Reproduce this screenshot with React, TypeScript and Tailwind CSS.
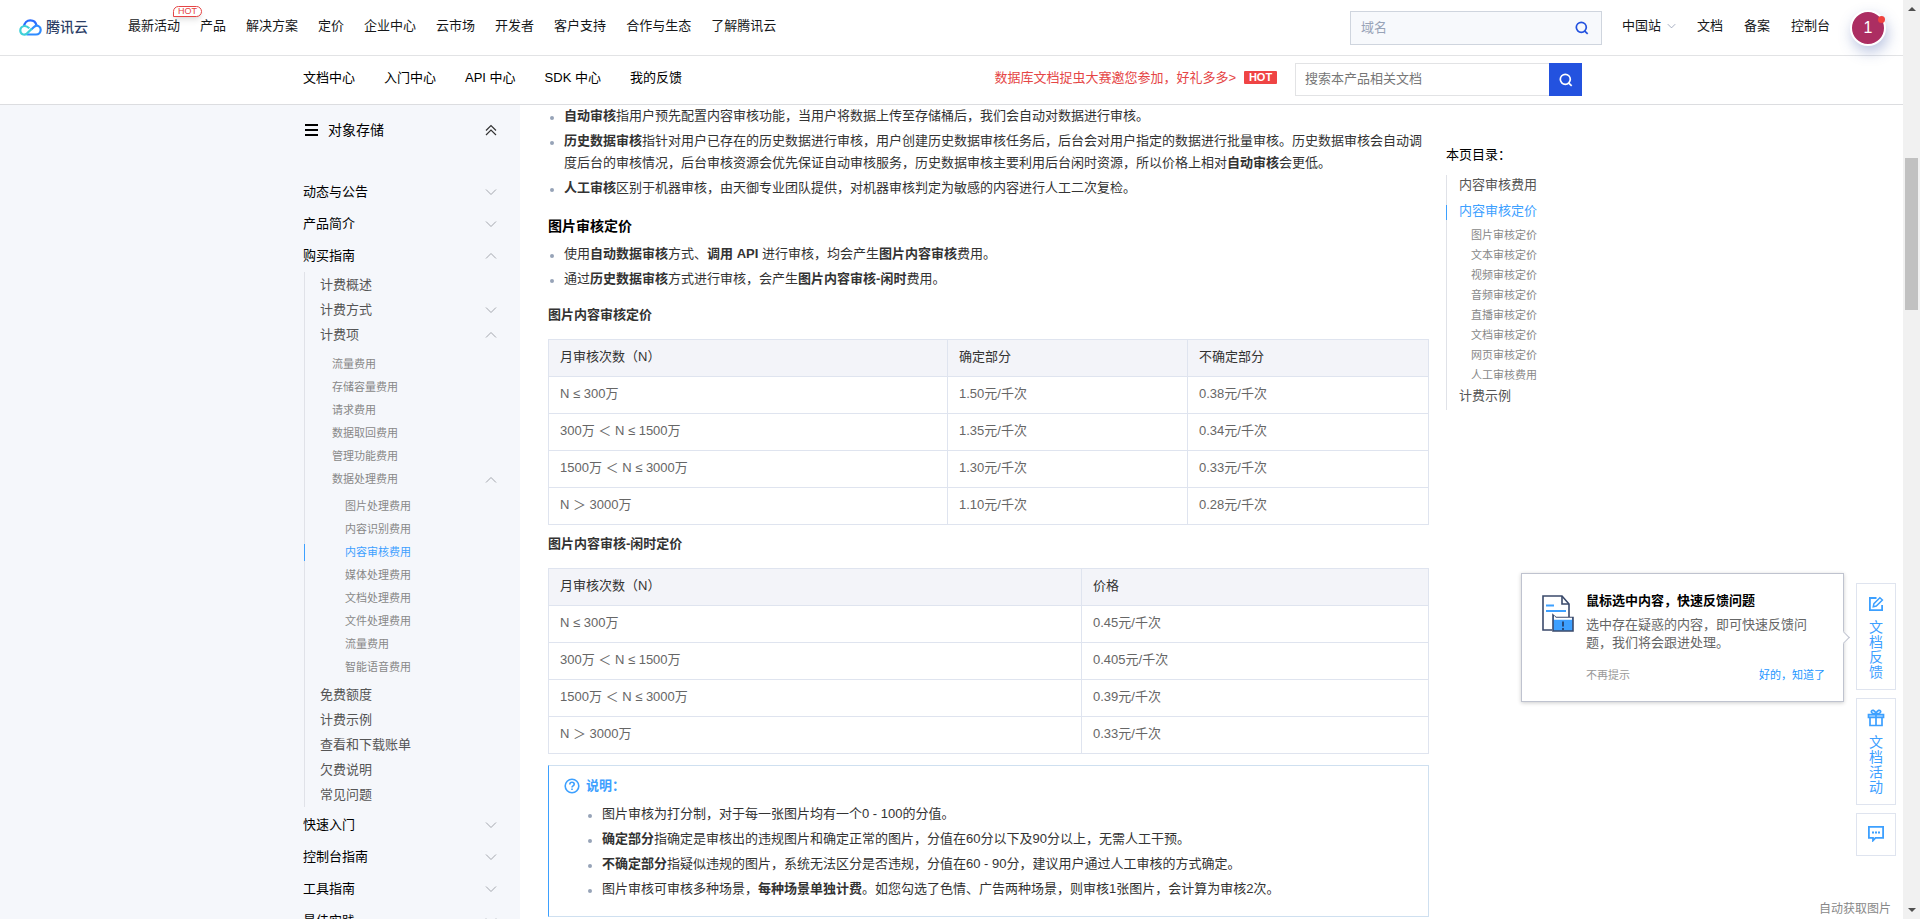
import React from 'react';
import clsx from 'clsx';

const FONT = "font-['Liberation_Sans','Noto_Sans_CJK_SC',sans-serif]";

const topNav = ['最新活动', '产品', '解决方案', '定价', '企业中心', '云市场', '开发者', '客户支持', '合作与生态', '了解腾讯云'];
const subNav = ['文档中心', '入门中心', 'API 中心', 'SDK 中心', '我的反馈'];

type MenuNode = {
  title: string;
  arrow?: 'up' | 'down';
  active?: boolean;
  children?: MenuNode[];
};

const menu: MenuNode[] = [
  { title: '动态与公告', arrow: 'down' },
  { title: '产品简介', arrow: 'down' },
  {
    title: '购买指南',
    arrow: 'up',
    children: [
      { title: '计费概述' },
      { title: '计费方式', arrow: 'down' },
      {
        title: '计费项',
        arrow: 'up',
        children: [
          { title: '流量费用' },
          { title: '存储容量费用' },
          { title: '请求费用' },
          { title: '数据取回费用' },
          { title: '管理功能费用' },
          {
            title: '数据处理费用',
            arrow: 'up',
            children: [
              { title: '图片处理费用' },
              { title: '内容识别费用' },
              { title: '内容审核费用', active: true },
              { title: '媒体处理费用' },
              { title: '文档处理费用' },
              { title: '文件处理费用' },
              { title: '流量费用' },
              { title: '智能语音费用' },
            ],
          },
        ],
      },
      { title: '免费额度' },
      { title: '计费示例' },
      { title: '查看和下载账单' },
      { title: '欠费说明' },
      { title: '常见问题' },
    ],
  },
  { title: '快速入门', arrow: 'down' },
  { title: '控制台指南', arrow: 'down' },
  { title: '工具指南', arrow: 'down' },
  { title: '最佳实践', arrow: 'down' },
];

const rowStyles = [
  'h-8 text-[13px] text-black',
  'h-[25px] pl-[15px] text-[13px] text-[#555]',
  'h-[23px] pl-[27px] text-[11px] text-[#888]',
  'h-[23px] pl-10 text-[11px] text-[#888]',
];

const listStyles = ['', 'ml-px mb-0.5 border-l border-[#e0e2e8]', 'pt-1.5 pb-[3px]', 'pt-1'];

const toc = ['图片审核定价', '文本审核定价', '视频审核定价', '音频审核定价', '直播审核定价', '文档审核定价', '网页审核定价', '人工审核费用'];

const imageRows = [
  ['N ≤ 300万', '1.50元/千次', '0.38元/千次'],
  ['300万 ＜ N ≤ 1500万', '1.35元/千次', '0.34元/千次'],
  ['1500万 ＜ N ≤ 3000万', '1.30元/千次', '0.33元/千次'],
  ['N ＞ 3000万', '1.10元/千次', '0.28元/千次'],
];

const idleRows = [
  ['N ≤ 300万', '0.45元/千次'],
  ['300万 ＜ N ≤ 1500万', '0.405元/千次'],
  ['1500万 ＜ N ≤ 3000万', '0.39元/千次'],
  ['N ＞ 3000万', '0.33元/千次'],
];

const Chevron = ({ up, className }: { up?: boolean; className?: string }) => (
  <svg viewBox="0 0 12 8" className={clsx('h-2 w-3', up && 'rotate-180', className)} fill="none" stroke="currentColor">
    <path d="M1 1.5l5 5 5-5" />
  </svg>
);

const SearchIcon = ({ className }: { className?: string }) => (
  <svg viewBox="0 0 14 14" className={className} fill="none" stroke="currentColor" strokeWidth="1.7">
    <circle cx="6.3" cy="6.3" r="5" />
    <path d="M9.5 9.8l3.2 3" />
  </svg>
);

const Logo = () => (
  <a href="#" className="flex items-center gap-1 text-[14px] font-medium text-[#2c3e66]">
    <svg viewBox="0 0 23 17" className="h-[17px] w-[23px]" fill="none" strokeWidth="2.2">
      <path d="M5 7.6C5.4 3.8 8 1.3 11.3 1.3c3.200 0 5.700 2.200 6.200 5.200" stroke="#2b6cff" />
      <path d="M12 10.800l3.200-3c3-2.500 6.500-.3 6.500 3 0 2.700-2 4.700-4.700 4.700H7.500" stroke="#2f8bff" />
      <path d="M12.800 9.800l-5 4.800c-2.600 2.200-6.500.6-6.500-3 0-2.600 2-4.600 4.500-4.600 2 0 3 .8 4.500 2.300" stroke="#3fd0d8" />
    </svg>
    腾讯云
  </a>
);

const MenuList = ({ nodes, level }: { nodes: MenuNode[]; level: number }) => (
  <ul className={listStyles[level]}>
    {nodes.map((node) => (
      <li key={node.title}>
        <a href="#" className={clsx('flex items-center justify-between pr-[23px]', rowStyles[level])}>
          {node.active ? (
            <span className="relative text-[#3da0ff] before:absolute before:top-0 before:-left-[41px] before:h-[17px] before:w-px before:bg-[#3da0ff]">
              {node.title}
            </span>
          ) : (
            <span>{node.title}</span>
          )}
          {node.arrow && <Chevron up={node.arrow === 'up'} className="text-[#a3a6ad]" />}
        </a>
        {node.children && <MenuList nodes={node.children} level={level + 1} />}
      </li>
    ))}
  </ul>
);

const Bullet = ({ children }: { children: React.ReactNode }) => (
  <li className="relative pl-4 before:absolute before:top-[11px] before:left-[2px] before:h-1 before:w-1 before:rounded-full before:bg-[#97a3b7]">
    {children}
  </li>
);

const PriceTable = ({ head, rows, widths }: { head: string[]; rows: string[][]; widths: string[] }) => (
  <table className="w-full table-fixed border-collapse text-left text-[13px] leading-[22px] text-[#666]">
    <thead>
      <tr className="h-[37px] bg-[#f3f4f9] text-[#333]">
        {head.map((text, i) => (
          <th key={text} className={clsx('border border-[#dfe4ef] px-[11px] pb-0.5 font-normal', widths[i])}>{text}</th>
        ))}
      </tr>
    </thead>
    <tbody>
      {rows.map((row) => (
        <tr key={row[0]} className="h-[37px]">
          {row.map((cell) => (
            <td key={cell} className="border border-[#dfe4ef] px-[11px] pb-0.5">{cell}</td>
          ))}
        </tr>
      ))}
    </tbody>
  </table>
);

const TopBar = () => (
  <header className="flex h-14 items-center border-b border-[#e2e3e5] bg-white pr-[17px] pl-[19px] text-[13px] text-[#16181a]">
    <Logo />
    <nav className="ml-10 flex gap-5 pb-1">
      {topNav.map((item, i) => (
        <a key={item} href="#" className="relative whitespace-nowrap">
          {item}
          {i === 0 && (
            <span className="absolute -top-[10px] left-[45px] flex h-[11px] w-[29px] items-center justify-center rounded-t-md rounded-br-md border border-[#e54545] bg-white text-[9px] leading-none text-[#e54545] shadow-md">
              HOT
            </span>
          )}
        </a>
      ))}
    </nav>
    <div className="ml-auto flex h-[34px] w-[252px] items-center border border-[#cfd5de] bg-[#f7f9fc] pr-3 pl-2.5">
      <input aria-label="搜索" placeholder="域名" className="min-w-0 flex-1 bg-transparent outline-none placeholder:text-[#97a3b7]" />
      <button type="button" aria-label="搜索" className="text-[#2352df]">
        <SearchIcon className="h-3.5 w-3.5" />
      </button>
    </div>
    <div className="ml-5 flex items-center gap-[21px] pb-1 whitespace-nowrap">
      <a href="#" className="flex items-center gap-1.5">
        中国站
        <Chevron className="h-1.5 w-[9px] text-[#8a94ad]" />
      </a>
      <a href="#">文档</a>
      <a href="#">备案</a>
      <a href="#">控制台</a>
    </div>
    <button type="button" className="relative ml-5 flex h-9 w-9 items-center justify-center rounded-full border-2 border-white bg-[#ac2e62] text-base text-white shadow-[2px_6px_14px_rgba(60,90,170,0.35)]">
      1
      <span className="absolute top-1 -right-px h-[7px] w-[7px] rounded-full bg-[#f0433f]" />
    </button>
  </header>
);

const SubBar = () => (
  <div className="flex h-[49px] items-center border-b border-[#dcdde0] bg-white pr-[321px] pb-px pl-[303px] text-[13px] text-black">
    <nav className="flex gap-[29px] pb-1">
      {subNav.map((item) => (
        <a key={item} href="#" className="whitespace-nowrap">{item}</a>
      ))}
    </nav>
    <a href="#" className="ml-auto flex items-center gap-2 pb-1 whitespace-nowrap text-[#e54545]">
      数据库文档捉虫大赛邀您参加，好礼多多&gt;
      <span className="flex h-[13px] w-[33px] items-center justify-center rounded-[1px] bg-[#ef4444] text-[11px] font-bold text-white">HOT</span>
    </a>
    <div className="ml-[18px] flex h-[33px]">
      <input aria-label="搜索本产品相关文档" placeholder="搜索本产品相关文档" className="w-[254px] border border-r-0 border-[#e2e3e5] px-[9px] pb-0.5 outline-none placeholder:text-[#777]" />
      <button type="button" aria-label="搜索" className="flex w-[33px] items-center justify-center bg-[#2352df] text-white">
        <SearchIcon className="h-3.5 w-3.5" />
      </button>
    </div>
  </div>
);

const Sidebar = () => (
  <aside className="w-[520px] shrink-0 bg-[#f5f7fb] pl-[303px]">
    <div className="mb-[21px] flex h-[50px] items-center pr-[23px] text-[14px] text-black">
      <svg viewBox="0 0 13 12" className="mr-2.5 ml-[2px] h-3 w-[13px]" fill="currentColor">
        <path d="M0 0h13v2H0zM0 5h13v2H0zM0 10h13v2H0z" />
      </svg>
      对象存储
      <button type="button" aria-label="收起" className="ml-auto">
        <svg viewBox="0 0 12 12" className="h-3 w-3" fill="none" stroke="#333" strokeWidth="1.2">
          <path d="M1 6.500l5-5 5 5M1 11l5-5 5 5" />
        </svg>
      </button>
    </div>
    <MenuList nodes={menu} level={0} />
  </aside>
);

const Article = () => (
  <article className="w-[881px] shrink-0 text-[13px] leading-[22px] text-[#333]">
    <ul className="flex flex-col gap-[3px]">
      <Bullet><b>自动审核</b>指用户预先配置内容审核功能，当用户将数据上传至存储桶后，我们会自动对数据进行审核。</Bullet>
      <Bullet>
        <b>历史数据审核</b>指针对用户已存在的历史数据进行审核，用户创建历史数据审核任务后，后台会对用户指定的数据进行批量审核。历史数据审核会自动调度后台的审核情况，后台审核资源会优先保证自动审核服务，历史数据审核主要利用后台闲时资源，所以价格上相对<b>自动审核</b>会更低。
      </Bullet>
      <Bullet><b>人工审核</b>区别于机器审核，由天御专业团队提供，对机器审核判定为敏感的内容进行人工二次复检。</Bullet>
    </ul>

    <h3 className="mt-4 text-[14px] font-bold text-black">图片审核定价</h3>
    <ul className="mt-1.5 flex flex-col gap-[3px]">
      <Bullet>使用<b>自动数据审核</b>方式、<b>调用 API</b> 进行审核，均会产生<b>图片内容审核</b>费用。</Bullet>
      <Bullet>通过<b>历史数据审核</b>方式进行审核，会产生<b>图片内容审核-闲时</b>费用。</Bullet>
    </ul>

    <h4 className="mt-3.5 mb-[13px] font-bold">图片内容审核定价</h4>
    <PriceTable head={['月审核次数（N）', '确定部分', '不确定部分']} rows={imageRows} widths={['w-[399px]', 'w-[240px]', '']} />

    <h4 className="mt-2 mb-[13px] font-bold">图片内容审核-闲时定价</h4>
    <PriceTable head={['月审核次数（N）', '价格']} rows={idleRows} widths={['w-[533px]', '']} />

    <section className="mt-[11px] border border-[#cfe0f0] border-l-[#3da0ff] pt-[9px] pr-4 pb-4 pl-[15px]">
      <div className="flex items-center gap-1.5 font-bold text-[#3da0ff]">
        <svg viewBox="0 0 16 16" className="h-4 w-4" fill="none" stroke="currentColor" strokeWidth="1.6">
          <circle cx="8" cy="8" r="6.800" />
          <path d="M5.800 6.400c0-1.300 1-2.100 2.200-2.100s2.200.8 2.200 2c0 1.500-2.200 1.600-2.200 3.100M8 10.500V12" />
        </svg>
        说明：
      </div>
      <ul className="mt-1.5 flex flex-col gap-[3px] pl-[22px]">
        <Bullet>图片审核为打分制，对于每一张图片均有一个0 - 100的分值。</Bullet>
        <Bullet><b>确定部分</b>指确定是审核出的违规图片和确定正常的图片，分值在60分以下及90分以上，无需人工干预。</Bullet>
        <Bullet><b>不确定部分</b>指疑似违规的图片，系统无法区分是否违规，分值在60 - 90分，建议用户通过人工审核的方式确定。</Bullet>
        <Bullet>图片审核可审核多种场景，<b>每种场景单独计费</b>。如您勾选了色情、广告两种场景，则审核1张图片，会计算为审核2次。</Bullet>
      </ul>
    </section>
  </article>
);

const PageToc = () => (
  <nav className="mt-10 ml-[17px] text-[13px] leading-5">
    <h5 className="mb-2.5 text-black">本页目录：</h5>
    <div className="border-l border-[#e0e2e8] pb-1 pl-3 text-[#555]">
      <a href="#" className="mb-1.5 block">内容审核费用</a>
      <a href="#" className="relative mb-1 block text-[#3da0ff] before:absolute before:top-1 before:-left-[13px] before:h-[15px] before:w-px before:bg-[#3da0ff]">
        内容审核定价
      </a>
      <ul className="mb-px pl-3 text-[11px] text-[#888]">
        {toc.map((item) => (
          <li key={item}><a href="#" className="block">{item}</a></li>
        ))}
      </ul>
      <a href="#" className="block">计费示例</a>
    </div>
  </nav>
);

const FeedbackTip = () => (
  <div className="absolute top-[573px] right-[59px] flex w-[323px] gap-3 border border-[#bfc3cf] bg-white pt-[18px] pr-[18px] pb-[17px] pl-5 shadow-[0_1px_4px_rgba(0,0,0,0.2)]">
    <svg viewBox="0 0 32 38" className="mt-[3px] h-[38px] w-8 shrink-0" fill="none" strokeWidth="1.6">
      <path d="M10 35H1V1h19l7 8v13" stroke="#3b4a6b" />
      <path d="M20 1v8h7" stroke="#3b4a6b" />
      <path d="M4 10.500h8M4 16h20" stroke="#3da0ff" strokeWidth="1.800" />
      <path d="M11 20l3 2.500h17V36H11z" fill="#3da0ff" stroke="#3b4a6b" />
      <path d="M12 20.500l2 2.200h16v2H12z" fill="#fff" />
      <path d="M21 26.500v5M21 33v2" stroke="#24365c" />
    </svg>
    <div className="flex-1">
      <div className="text-[13px] leading-[18px] font-bold text-black">鼠标选中内容，快速反馈问题</div>
      <p className="mt-1.5 pr-4 text-[13px] leading-[18px] text-[#666]">选中存在疑惑的内容，即可快速反馈问题，我们将会跟进处理。</p>
      <div className="mt-3.5 flex justify-between text-[11px] leading-[18px]">
        <button type="button" className="text-[#999]">不再提示</button>
        <button type="button" className="text-[#1e96ff]">好的，知道了</button>
      </div>
    </div>
    <span className="absolute top-[59px] -right-[5px] h-[9px] w-[9px] rotate-45 border-t border-r border-[#bfc3cf] bg-white" />
  </div>
);

const sideButton = 'flex w-10 flex-col items-center border border-[#dfe4ef] bg-white text-center text-[14px] leading-[15px] text-[#3da0ff]';

const SideTools = () => (
  <div className="absolute top-[583px] right-[7px] flex flex-col gap-2">
    <button type="button" className={clsx(sideButton, 'h-[107px] pt-3')}>
      <svg viewBox="0 0 16 16" className="mb-2 h-4 w-4" fill="none" stroke="currentColor" strokeWidth="1.8">
        <path d="M8.500 2H1.900v12.200h12.200V9" />
        <path d="M5.300 10.700l.6-3 6-6 2.500 2.300-6.100 6.100z" strokeWidth="1.500" />
      </svg>
      <span className="w-3.5">文档反馈</span>
    </button>
    <button type="button" className={clsx(sideButton, 'h-[107px] pt-2.5')}>
      <svg viewBox="0 0 18 18" className="mb-2 h-[18px] w-[18px]" fill="none" stroke="currentColor" strokeWidth="1.700">
        <path d="M1.500 5.500h15v3h-15z" fill="#9fd0ff" />
        <path d="M3 8.500v8h12v-8M9 5.500v11M9 5C7.500 5 4 4.500 4.300 2.400 4.700.5 8 .8 9 5c1-4.200 4.300-4.500 4.700-2.600C14 4.500 10.500 5 9 5z" />
      </svg>
      <span className="w-3.5">文档活动</span>
    </button>
    <button type="button" aria-label="在线咨询" className={clsx(sideButton, 'h-[43px] pt-3')}>
      <svg viewBox="0 0 16 16" className="h-4 w-4" fill="none" stroke="currentColor" strokeWidth="1.800">
        <path d="M.9.900h14.200v11H7.500L5 14.500v-2.600H.9z" />
        <path d="M4 6.500h2M7 6.500h2M10 6.500h2" />
      </svg>
    </button>
  </div>
);

const Scrollbar = () => (
  <div className="flex w-[17px] shrink-0 flex-col items-center justify-between bg-[#f1f1f1] py-[7px]">
    <span className="border-x-[4px] border-b-[4px] border-x-transparent border-b-[#505050]" />
    <div className="mt-[147px] mb-auto h-[152px] w-[13px] bg-[#c1c1c1]" />
    <span className="border-x-[4px] border-t-[4px] border-x-transparent border-t-[#505050]" />
  </div>
);

const App = () => {
  return (
    <div lang="zh-CN" className={clsx('flex h-screen overflow-hidden bg-white', FONT)}>
      <div className="relative flex min-w-0 flex-1 flex-col overflow-hidden">
        <TopBar />
        <SubBar />
        <main className="flex min-h-0 flex-1 overflow-hidden">
          <Sidebar />
          <div className="w-7 shrink-0" />
          <Article />
          <PageToc />
        </main>
        <FeedbackTip />
        <SideTools />
        <span className="absolute right-3 bottom-0.5 text-[12px] leading-4 text-[#888]">自动获取图片</span>
      </div>
      <Scrollbar />
    </div>
  );
};

export default App;
